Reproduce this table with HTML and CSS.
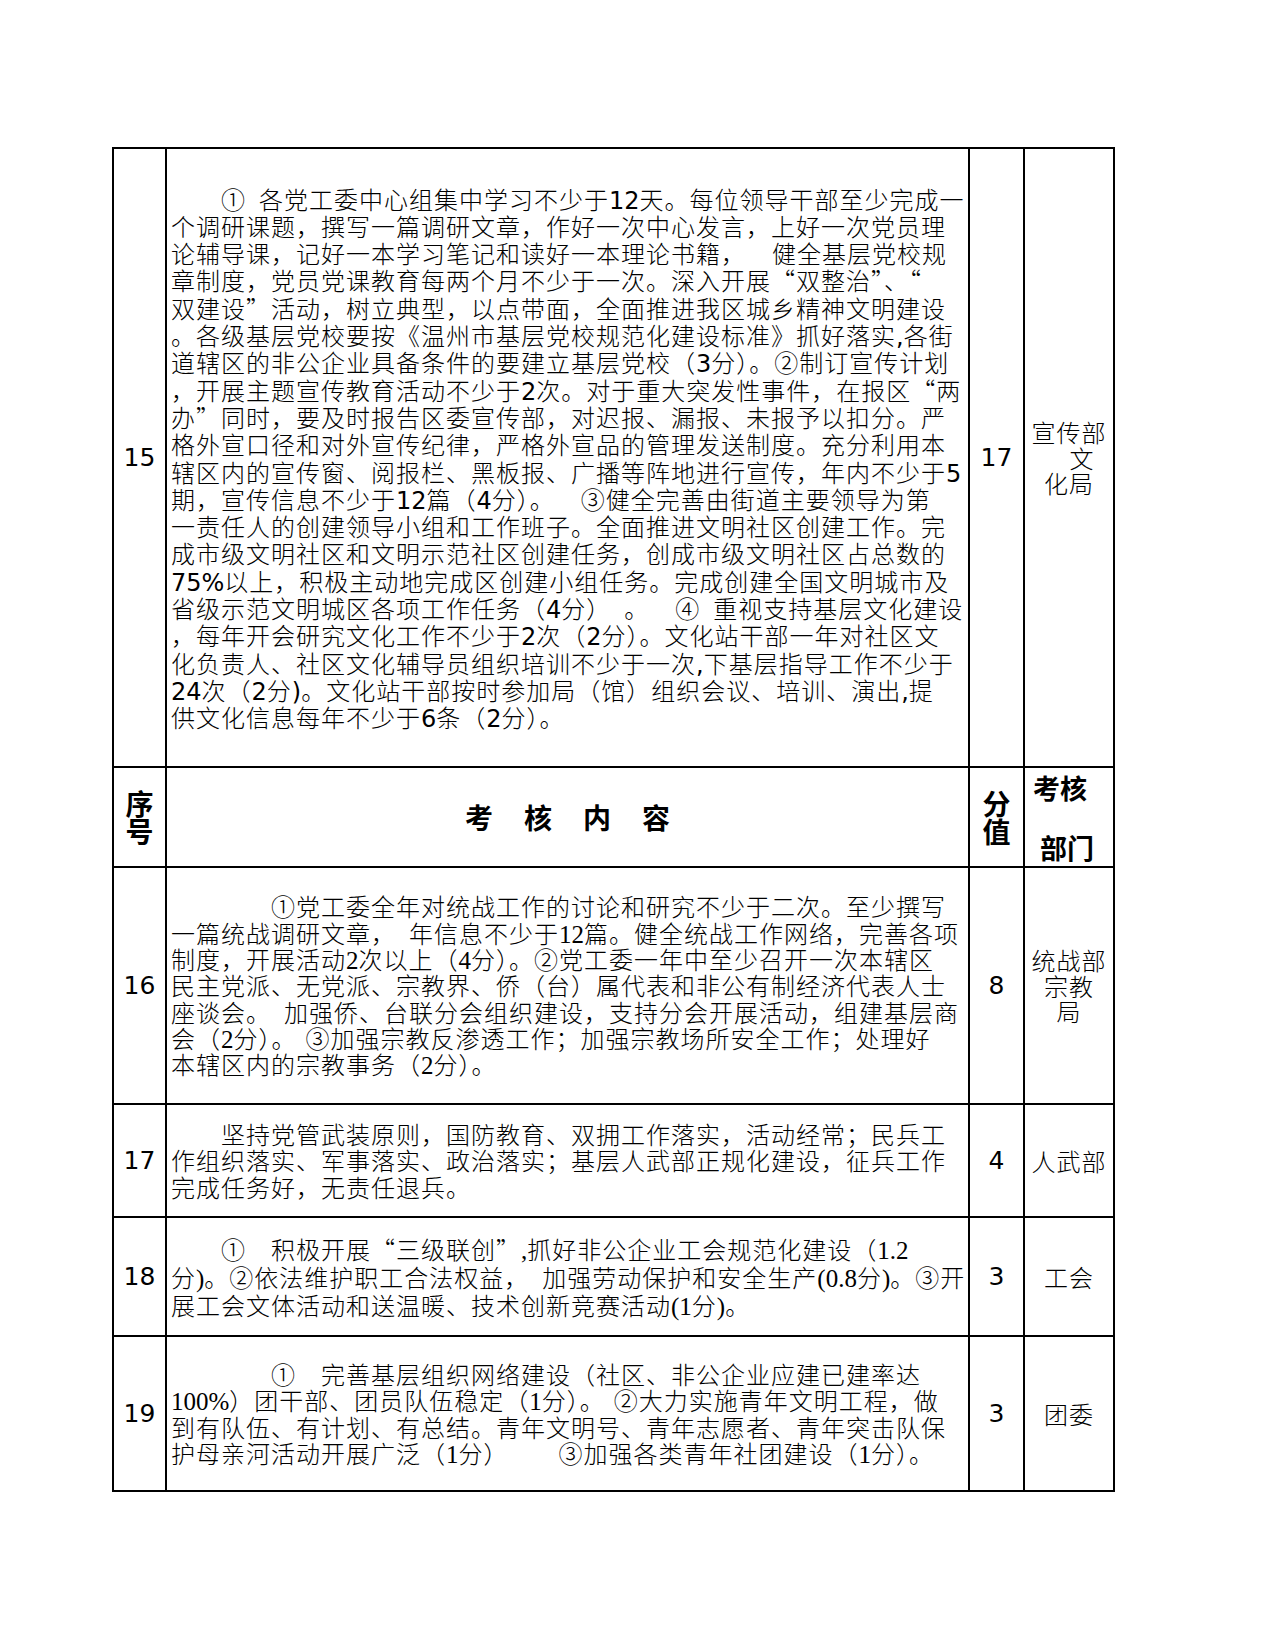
FILE: index.html
```html
<!DOCTYPE html>
<html lang="zh-CN">
<head>
<meta charset="utf-8">
<title>考核内容</title>
<link rel="stylesheet" href="styles.css">
</head>
<body>
<div class="page">
<table class="grid">
<colgroup>
<col class="c-no"><col class="c-text"><col class="c-score"><col class="c-dept">
</colgroup>
<tbody>
<tr class="r15">
<td class="no">15</td>
<td class="txt t15"><span class="ind2">①</span>&ensp;各党工委中心组集中学习不少于<span class="dv">12</span>天。每位领导干部至少完成一<br>个调研课题，撰写一篇调研文章，作好一次中心发言，上好一次党员理<br>论辅导课，记好一本学习笔记和读好一本理论书籍，&ensp;&ensp;健全基层党校规<br>章制度，党员党课教育每两个月不少于一次。深入开展“双整治”、“<br>双建设”活动，树立典型，以点带面，全面推进我区城乡精神文明建设<br>。各级基层党校要按《温州市基层党校规范化建设标准》抓好落实<span class="dv">,</span>各街<br>道辖区的非公企业具备条件的要建立基层党校（<span class="dv">3</span>分）。②制订宣传计划<br>，开展主题宣传教育活动不少于<span class="dv">2</span>次。对于重大突发性事件，在报区“两<br>办”同时，要及时报告区委宣传部，对迟报、漏报、未报予以扣分。严<br>格外宣口径和对外宣传纪律，严格外宣品的管理发送制度。充分利用本<br>辖区内的宣传窗、阅报栏、黑板报、广播等阵地进行宣传，年内不少于<span class="dv">5</span><br>期，宣传信息不少于<span class="dv">12</span>篇（<span class="dv">4</span>分）。&ensp;&ensp;③健全完善由街道主要领导为第<br>一责任人的创建领导小组和工作班子。全面推进文明社区创建工作。完<br>成市级文明社区和文明示范社区创建任务，创成市级文明社区占总数的<br><span class="dv">75%</span>以上，积极主动地完成区创建小组任务。完成创建全国文明城市及<br>省级示范文明城区各项工作任务（<span class="dv">4</span>分）&ensp;。&ensp;&ensp;④&ensp;重视支持基层文化建设<br>，每年开会研究文化工作不少于<span class="dv">2</span>次（<span class="dv">2</span>分）。文化站干部一年对社区文<br>化负责人、社区文化辅导员组织培训不少于一次<span class="dv">,</span>下基层指导工作不少于<br><span class="dv">24</span>次（<span class="dv">2</span>分<span class="dv">)</span>。文化站干部按时参加局（馆）组织会议、培训、演出<span class="dv">,</span>提<br>供文化信息每年不少于<span class="dv">6</span>条（<span class="dv">2</span>分）。</td>
<td class="score">17</td>
<td class="dept">宣传部<br><span class="dept-shift">文</span><br>化局</td>
</tr>
<tr class="head">
<th class="vert">序<br>号</th>
<th class="title-cell"><div class="title"><span>考</span><span>核</span><span>内</span><span>容</span></div></th>
<th class="vert">分<br>值</th>
<th class="dept-head-cell"><div class="dept-head"><span class="dh1">考核</span><span class="dh2">部门</span></div></th>
</tr>
<tr class="r16">
<td class="no">16</td>
<td class="txt"><span class="ind4">①</span>党工委全年对统战工作的讨论和研究不少于二次。至少撰写<br>一篇统战调研文章，&ensp;年信息不少于<span class="sf">12</span>篇。健全统战工作网络，完善各项<br>制度，开展活动<span class="sf">2</span>次以上（<span class="sf">4</span>分）。②党工委一年中至少召开一次本辖区<br>民主党派、无党派、宗教界、侨（台）属代表和非公有制经济代表人士<br>座谈会。&ensp;加强侨、台联分会组织建设，支持分会开展活动，组建基层商<br>会（<span class="sf">2</span>分）。&#8196;③加强宗教反渗透工作；加强宗教场所安全工作；处理好<br>本辖区内的宗教事务（<span class="sf">2</span>分）。</td>
<td class="score">8</td>
<td class="dept">统战部<br>宗教<br>局</td>
</tr>
<tr class="r17">
<td class="no">17</td>
<td class="txt"><span class="ind2">坚</span>持党管武装原则，国防教育、双拥工作落实，活动经常；民兵工<br>作组织落实、军事落实、政治落实；基层人武部正规化建设，征兵工作<br>完成任务好，无责任退兵。</td>
<td class="score">4</td>
<td class="dept">人武部</td>
</tr>
<tr class="r18">
<td class="no">18</td>
<td class="txt t18"><span class="ind2">①</span>&emsp;积极开展“三级联创”<span class="sf">,</span>抓好非公企业工会规范化建设（<span class="sf">1.2</span><br>分<span class="sf">)</span>。②依法维护职工合法权益，&ensp;加强劳动保护和安全生产<span class="sf">(0.8</span>分<span class="sf">)</span>。③开<br>展工会文体活动和送温暖、技术创新竞赛活动<span class="sf">(1</span>分<span class="sf">)</span>。</td>
<td class="score">3</td>
<td class="dept">工会</td>
</tr>
<tr class="r19">
<td class="no">19</td>
<td class="txt"><span class="ind4">①</span>&emsp;完善基层组织网络建设（社区、非公企业应建已建率达<br><span class="sf">100%</span>）团干部、团员队伍稳定（<span class="sf">1</span>分）。&#8196;②大力实施青年文明工程，做<br>到有队伍、有计划、有总结。青年文明号、青年志愿者、青年突击队保<br>护母亲河活动开展广泛（<span class="sf">1</span>分）&emsp;&emsp;③加强各类青年社团建设（<span class="sf">1</span>分）。</td>
<td class="score">3</td>
<td class="dept">团委</td>
</tr>
</tbody>
</table>
</div>
</body>
</html>
```
FILE: styles.css
```css
html, body {
  margin: 0;
  padding: 0;
  background: #ffffff;
}

body {
  font-family: "Noto Sans CJK SC", "Noto Sans", sans-serif;
  color: #000000;
}

.page {
  width: 1275px;
  min-height: 1650px;
  box-sizing: border-box;
  padding: 147px 0 0 112px;
}

.grid {
  border-collapse: collapse;
  table-layout: fixed;
  width: 1001px;
}

.c-no { width: 53px; }
.c-text { width: 803px; }
.c-score { width: 55px; }
.c-dept { width: 90px; }

.grid td,
.grid th {
  border: 2px solid #000000;
  padding: 0;
  vertical-align: middle;
}

.r15 { height: 619px; }
.head { height: 100px; }
.r16 { height: 237px; }
.r17 { height: 113px; }
.r18 { height: 119px; }
.r19 { height: 155px; }

.no,
.score {
  font-family: "DejaVu Sans", sans-serif;
  font-size: 25px;
  text-align: center;
}

.txt {
  font-size: 24px;
  font-weight: 300;
  letter-spacing: 1px;
  line-height: 26.3px;
  white-space: nowrap;
  padding: 0 0 0 4px !important;
  text-align: left;
}

.t15 { line-height: 27.3px; }
.t18 { line-height: 28px; }

.ind2 { margin-left: 50px; }
.ind4 { margin-left: 100px; }

.dv {
  font-family: "DejaVu Sans", sans-serif;
  font-weight: 400;
  letter-spacing: 0;
  line-height: 0;
}

.sf {
  font-family: "Liberation Serif", serif;
  font-weight: 400;
  font-size: 25px;
  letter-spacing: 0;
  line-height: 0;
}

.dept {
  font-size: 24px;
  font-weight: 300;
  letter-spacing: 1px;
  line-height: 25.5px;
  text-align: center;
}

.dept-shift {
  padding-left: 26px;
}

.vert {
  font-size: 28px;
  font-weight: 700;
  line-height: 28px;
  text-align: center;
}

.title {
  display: flex;
  justify-content: center;
  gap: 31px;
  font-size: 28px;
  font-weight: 700;
}

.dept-head {
  display: flex;
  flex-direction: column;
  align-items: flex-start;
  gap: 31px;
  font-size: 27px;
  font-weight: 700;
  line-height: 29px;
  padding-left: 8px;
}

.dh2 { margin-left: 7px; }
```
